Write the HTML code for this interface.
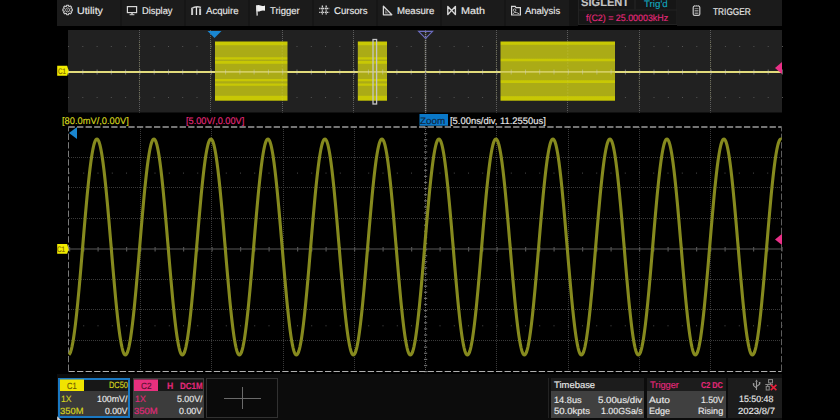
<!DOCTYPE html>
<html><head><meta charset="utf-8"><style>
html,body{margin:0;padding:0;width:840px;height:420px;overflow:hidden;background:#000;}
.t{position:absolute;white-space:nowrap;font-family:"Liberation Sans", sans-serif;line-height:20px;transform-origin:0 0;text-rendering:geometricPrecision;-webkit-text-stroke:0.15px currentColor;}
svg{position:absolute;left:0;top:0;}
</style></head><body>
<svg width="840" height="420" viewBox="0 0 840 420"><defs><linearGradient id="yb1" x1="0" y1="0" x2="0" y2="1"><stop offset="0" stop-color="#c8c804"/><stop offset="0.0541" stop-color="#c8c804"/><stop offset="0.0709" stop-color="#abab16"/><stop offset="0.2601" stop-color="#abab16"/><stop offset="0.2736" stop-color="#c8c804"/><stop offset="0.2973" stop-color="#c8c804"/><stop offset="0.3108" stop-color="#abab16"/><stop offset="0.3209" stop-color="#abab16"/><stop offset="0.3345" stop-color="#c8c804"/><stop offset="0.3682" stop-color="#c8c804"/><stop offset="0.3818" stop-color="#abab16"/><stop offset="0.6284" stop-color="#abab16"/><stop offset="0.6419" stop-color="#c8c804"/><stop offset="0.6655" stop-color="#c8c804"/><stop offset="0.6791" stop-color="#abab16"/><stop offset="0.7027" stop-color="#abab16"/><stop offset="0.7162" stop-color="#c8c804"/><stop offset="0.7399" stop-color="#c8c804"/><stop offset="0.7534" stop-color="#abab16"/><stop offset="0.9088" stop-color="#abab16"/><stop offset="0.9257" stop-color="#c8c804"/><stop offset="1" stop-color="#c8c804"/></linearGradient><linearGradient id="yb3" x1="0" y1="0" x2="0" y2="1"><stop offset="0" stop-color="#c8c804"/><stop offset="0.0473" stop-color="#c8c804"/><stop offset="0.0642" stop-color="#abab16"/><stop offset="0.2838" stop-color="#abab16"/><stop offset="0.2973" stop-color="#c8c804"/><stop offset="0.3277" stop-color="#c8c804"/><stop offset="0.3412" stop-color="#abab16"/><stop offset="0.6486" stop-color="#abab16"/><stop offset="0.6622" stop-color="#c8c804"/><stop offset="0.6926" stop-color="#c8c804"/><stop offset="0.7061" stop-color="#abab16"/><stop offset="0.9155" stop-color="#abab16"/><stop offset="0.9324" stop-color="#c8c804"/><stop offset="1" stop-color="#c8c804"/></linearGradient></defs>
<rect x="57" y="0" width="512" height="26" fill="#1b1b1b"/><rect x="120.5" y="0" width="1" height="26" fill="#121212"/><rect x="184.5" y="0" width="1" height="26" fill="#121212"/><rect x="248.5" y="0" width="1" height="26" fill="#121212"/><rect x="312.5" y="0" width="1" height="26" fill="#121212"/><rect x="376.5" y="0" width="1" height="26" fill="#121212"/><rect x="440.5" y="0" width="1" height="26" fill="#121212"/><rect x="504.5" y="0" width="1" height="26" fill="#121212"/><rect x="569" y="0" width="9" height="26" fill="#141414"/><rect x="578" y="0" width="99" height="25" fill="#161616"/><rect x="578" y="0" width="1" height="25" fill="#222"/><rect x="578" y="24" width="99" height="1" fill="#222"/><rect x="676.5" y="0" width="1" height="25" fill="#222"/><rect x="578" y="9.5" width="99" height="1" fill="#232323"/><rect x="634.5" y="0" width="1" height="9.5" fill="#262626"/><rect x="677" y="0" width="105" height="26" fill="#1b1b1b"/><polygon points="71.18,8.79 72.35,8.94 72.35,10.86 71.18,11.01 70.92,11.65 71.64,12.58 70.28,13.94 69.35,13.22 68.71,13.48 68.56,14.65 66.64,14.65 66.49,13.48 65.85,13.22 64.92,13.94 63.56,12.58 64.28,11.65 64.02,11.01 62.85,10.86 62.85,8.94 64.02,8.79 64.28,8.15 63.56,7.22 64.92,5.86 65.85,6.58 66.49,6.32 66.64,5.15 68.56,5.15 68.71,6.32 69.35,6.58 70.28,5.86 71.64,7.22 70.92,8.15" fill="none" stroke="#cfcfcf" stroke-width="1.05" stroke-linejoin="round"/><circle cx="67.6" cy="9.9" r="2.0" fill="none" stroke="#bdbdbd" stroke-width="0.9"/><circle cx="67.6" cy="9.9" r="0.6" fill="#aaa"/><rect x="127.4" y="6.6" width="9.2" height="6" fill="none" stroke="#d8d8d8" stroke-width="1.2"/><rect x="131.3" y="12.8" width="1.4" height="1.6" fill="#d8d8d8"/><rect x="129.6" y="14.2" width="4.8" height="1" fill="#d8d8d8"/><path d="M192.1,15 V9" fill="none" stroke="#c8c8c8" stroke-width="2.0"/><path d="M191.2,8.6 Q196,5.6 201,7.4" fill="none" stroke="#cfcfcf" stroke-width="1.3"/><path d="M200.1,15 V8.4" fill="none" stroke="#c8c8c8" stroke-width="2.0"/><rect x="195.8" y="7" width="1.3" height="8" fill="#e8e8e8"/><path d="M256,5.6 Q258.5,4.6 260.5,5.6 T265,5.4 V10.8 Q262.5,10 260.5,11 T256.6,11.2 Z" fill="#f0f0f0"/><path d="M256.6,5.6 L257.2,15.6" stroke="#ddd" stroke-width="1.3"/><line x1="322.4" y1="5.6" x2="322.4" y2="15" stroke="#d8d8d8" stroke-width="1.3" stroke-dasharray="1.3 0.6"/><line x1="326.2" y1="5.6" x2="326.2" y2="15" stroke="#d8d8d8" stroke-width="1.3" stroke-dasharray="1.3 0.6"/><line x1="319.2" y1="8.5" x2="329.2" y2="8.5" stroke="#d8d8d8" stroke-width="1.3" stroke-dasharray="1.3 0.6"/><line x1="319.2" y1="12.3" x2="329.2" y2="12.3" stroke="#d8d8d8" stroke-width="1.3" stroke-dasharray="1.3 0.6"/><path d="M383.4,6.2 V14.8 H391.8 Z" fill="none" stroke="#d8d8d8" stroke-width="1.3" stroke-linejoin="round"/><path d="M385,9.8 V13.4 H388.6 Z" fill="#777"/><path d="M447.8,6.4 L451.6,10.4 L455.4,6.4 V14.6 L451.6,10.4 L447.8,14.6 Z" fill="none" stroke="#d8d8d8" stroke-width="1.4" stroke-linejoin="round"/><path d="M511.6,6.4 H515.2 L516,7.6 H520.4 V15 H511.6 Z" fill="none" stroke="#d8d8d8" stroke-width="1.2"/><circle cx="514.6" cy="10.2" r="1.3" fill="none" stroke="#bbb" stroke-width="0.9"/><path d="M512.6,14 Q514.6,11.6 516.6,12.6 Q518,13.2 519.2,13.8" fill="none" stroke="#bbb" stroke-width="1"/><rect x="693.2" y="6" width="6.6" height="9.4" rx="1.4" fill="none" stroke="#c8c8c8" stroke-width="1.2"/><rect x="694.6" y="8.25" width="3.8" height="0.9" fill="#999"/><rect x="694.6" y="10.05" width="3.8" height="0.9" fill="#999"/><rect x="694.6" y="11.55" width="3.8" height="0.9" fill="#999"/><rect x="694.6" y="13.05" width="3.8" height="0.9" fill="#999"/><rect x="694.2" y="5.2" width="0.8" height="1" fill="#aaa"/><rect x="696.1" y="5.2" width="0.8" height="1" fill="#aaa"/><rect x="698.0" y="5.2" width="0.8" height="1" fill="#aaa"/><rect x="68" y="30" width="714" height="82.5" fill="#212121"/><line x1="139.5" y1="30" x2="139.5" y2="112.5" stroke="#5c5c5c" stroke-width="1" stroke-dasharray="1 1"/><line x1="210.5" y1="30" x2="210.5" y2="112.5" stroke="#5c5c5c" stroke-width="1" stroke-dasharray="1 1"/><line x1="282.5" y1="30" x2="282.5" y2="112.5" stroke="#5c5c5c" stroke-width="1" stroke-dasharray="1 1"/><line x1="353.5" y1="30" x2="353.5" y2="112.5" stroke="#5c5c5c" stroke-width="1" stroke-dasharray="1 1"/><line x1="425.5" y1="30" x2="425.5" y2="112.5" stroke="#5c5c5c" stroke-width="1" stroke-dasharray="1 1"/><line x1="496.5" y1="30" x2="496.5" y2="112.5" stroke="#5c5c5c" stroke-width="1" stroke-dasharray="1 1"/><line x1="567.5" y1="30" x2="567.5" y2="112.5" stroke="#5c5c5c" stroke-width="1" stroke-dasharray="1 1"/><line x1="639.5" y1="30" x2="639.5" y2="112.5" stroke="#5c5c5c" stroke-width="1" stroke-dasharray="1 1"/><line x1="710.5" y1="30" x2="710.5" y2="112.5" stroke="#5c5c5c" stroke-width="1" stroke-dasharray="1 1"/><rect x="68.0" y="46" width="1" height="1" fill="#555"/><rect x="82.3" y="46" width="1" height="1" fill="#555"/><rect x="96.6" y="46" width="1" height="1" fill="#555"/><rect x="110.8" y="46" width="1" height="1" fill="#555"/><rect x="125.1" y="46" width="1" height="1" fill="#555"/><rect x="139.4" y="46" width="1" height="1" fill="#555"/><rect x="153.7" y="46" width="1" height="1" fill="#555"/><rect x="168.0" y="46" width="1" height="1" fill="#555"/><rect x="182.2" y="46" width="1" height="1" fill="#555"/><rect x="196.5" y="46" width="1" height="1" fill="#555"/><rect x="210.8" y="46" width="1" height="1" fill="#555"/><rect x="225.1" y="46" width="1" height="1" fill="#555"/><rect x="239.4" y="46" width="1" height="1" fill="#555"/><rect x="253.6" y="46" width="1" height="1" fill="#555"/><rect x="267.9" y="46" width="1" height="1" fill="#555"/><rect x="282.2" y="46" width="1" height="1" fill="#555"/><rect x="296.5" y="46" width="1" height="1" fill="#555"/><rect x="310.8" y="46" width="1" height="1" fill="#555"/><rect x="325.0" y="46" width="1" height="1" fill="#555"/><rect x="339.3" y="46" width="1" height="1" fill="#555"/><rect x="353.6" y="46" width="1" height="1" fill="#555"/><rect x="367.9" y="46" width="1" height="1" fill="#555"/><rect x="382.2" y="46" width="1" height="1" fill="#555"/><rect x="396.4" y="46" width="1" height="1" fill="#555"/><rect x="410.7" y="46" width="1" height="1" fill="#555"/><rect x="425.0" y="46" width="1" height="1" fill="#555"/><rect x="439.3" y="46" width="1" height="1" fill="#555"/><rect x="453.6" y="46" width="1" height="1" fill="#555"/><rect x="467.8" y="46" width="1" height="1" fill="#555"/><rect x="482.1" y="46" width="1" height="1" fill="#555"/><rect x="496.4" y="46" width="1" height="1" fill="#555"/><rect x="510.7" y="46" width="1" height="1" fill="#555"/><rect x="525.0" y="46" width="1" height="1" fill="#555"/><rect x="539.2" y="46" width="1" height="1" fill="#555"/><rect x="553.5" y="46" width="1" height="1" fill="#555"/><rect x="567.8" y="46" width="1" height="1" fill="#555"/><rect x="582.1" y="46" width="1" height="1" fill="#555"/><rect x="596.4" y="46" width="1" height="1" fill="#555"/><rect x="610.6" y="46" width="1" height="1" fill="#555"/><rect x="624.9" y="46" width="1" height="1" fill="#555"/><rect x="639.2" y="46" width="1" height="1" fill="#555"/><rect x="653.5" y="46" width="1" height="1" fill="#555"/><rect x="667.8" y="46" width="1" height="1" fill="#555"/><rect x="682.0" y="46" width="1" height="1" fill="#555"/><rect x="696.3" y="46" width="1" height="1" fill="#555"/><rect x="710.6" y="46" width="1" height="1" fill="#555"/><rect x="724.9" y="46" width="1" height="1" fill="#555"/><rect x="739.2" y="46" width="1" height="1" fill="#555"/><rect x="753.4" y="46" width="1" height="1" fill="#555"/><rect x="767.7" y="46" width="1" height="1" fill="#555"/><rect x="782.0" y="46" width="1" height="1" fill="#555"/><rect x="68.0" y="97" width="1" height="1" fill="#555"/><rect x="82.3" y="97" width="1" height="1" fill="#555"/><rect x="96.6" y="97" width="1" height="1" fill="#555"/><rect x="110.8" y="97" width="1" height="1" fill="#555"/><rect x="125.1" y="97" width="1" height="1" fill="#555"/><rect x="139.4" y="97" width="1" height="1" fill="#555"/><rect x="153.7" y="97" width="1" height="1" fill="#555"/><rect x="168.0" y="97" width="1" height="1" fill="#555"/><rect x="182.2" y="97" width="1" height="1" fill="#555"/><rect x="196.5" y="97" width="1" height="1" fill="#555"/><rect x="210.8" y="97" width="1" height="1" fill="#555"/><rect x="225.1" y="97" width="1" height="1" fill="#555"/><rect x="239.4" y="97" width="1" height="1" fill="#555"/><rect x="253.6" y="97" width="1" height="1" fill="#555"/><rect x="267.9" y="97" width="1" height="1" fill="#555"/><rect x="282.2" y="97" width="1" height="1" fill="#555"/><rect x="296.5" y="97" width="1" height="1" fill="#555"/><rect x="310.8" y="97" width="1" height="1" fill="#555"/><rect x="325.0" y="97" width="1" height="1" fill="#555"/><rect x="339.3" y="97" width="1" height="1" fill="#555"/><rect x="353.6" y="97" width="1" height="1" fill="#555"/><rect x="367.9" y="97" width="1" height="1" fill="#555"/><rect x="382.2" y="97" width="1" height="1" fill="#555"/><rect x="396.4" y="97" width="1" height="1" fill="#555"/><rect x="410.7" y="97" width="1" height="1" fill="#555"/><rect x="425.0" y="97" width="1" height="1" fill="#555"/><rect x="439.3" y="97" width="1" height="1" fill="#555"/><rect x="453.6" y="97" width="1" height="1" fill="#555"/><rect x="467.8" y="97" width="1" height="1" fill="#555"/><rect x="482.1" y="97" width="1" height="1" fill="#555"/><rect x="496.4" y="97" width="1" height="1" fill="#555"/><rect x="510.7" y="97" width="1" height="1" fill="#555"/><rect x="525.0" y="97" width="1" height="1" fill="#555"/><rect x="539.2" y="97" width="1" height="1" fill="#555"/><rect x="553.5" y="97" width="1" height="1" fill="#555"/><rect x="567.8" y="97" width="1" height="1" fill="#555"/><rect x="582.1" y="97" width="1" height="1" fill="#555"/><rect x="596.4" y="97" width="1" height="1" fill="#555"/><rect x="610.6" y="97" width="1" height="1" fill="#555"/><rect x="624.9" y="97" width="1" height="1" fill="#555"/><rect x="639.2" y="97" width="1" height="1" fill="#555"/><rect x="653.5" y="97" width="1" height="1" fill="#555"/><rect x="667.8" y="97" width="1" height="1" fill="#555"/><rect x="682.0" y="97" width="1" height="1" fill="#555"/><rect x="696.3" y="97" width="1" height="1" fill="#555"/><rect x="710.6" y="97" width="1" height="1" fill="#555"/><rect x="724.9" y="97" width="1" height="1" fill="#555"/><rect x="739.2" y="97" width="1" height="1" fill="#555"/><rect x="753.4" y="97" width="1" height="1" fill="#555"/><rect x="767.7" y="97" width="1" height="1" fill="#555"/><rect x="782.0" y="97" width="1" height="1" fill="#555"/><rect x="68" y="71" width="714" height="2" fill="#e2dc7c"/><rect x="215" y="41.5" width="72.5" height="59.2" fill="url(#yb1)"/><rect x="357.8" y="41.5" width="29.19999999999999" height="59.2" fill="url(#yb1)"/><rect x="500.5" y="41.5" width="114.5" height="59.2" fill="url(#yb3)"/><line x1="139.4" y1="41.5" x2="139.4" y2="101" stroke="#e0e080" stroke-width="1" stroke-dasharray="1 2" opacity="0.35"/><line x1="210.8" y1="41.5" x2="210.8" y2="101" stroke="#e0e080" stroke-width="1" stroke-dasharray="1 2" opacity="0.35"/><line x1="282.2" y1="41.5" x2="282.2" y2="101" stroke="#e0e080" stroke-width="1" stroke-dasharray="1 2" opacity="0.35"/><line x1="353.6" y1="41.5" x2="353.6" y2="101" stroke="#e0e080" stroke-width="1" stroke-dasharray="1 2" opacity="0.35"/><line x1="425.0" y1="41.5" x2="425.0" y2="101" stroke="#e0e080" stroke-width="1" stroke-dasharray="1 2" opacity="0.35"/><line x1="496.4" y1="41.5" x2="496.4" y2="101" stroke="#e0e080" stroke-width="1" stroke-dasharray="1 2" opacity="0.35"/><line x1="567.8" y1="41.5" x2="567.8" y2="101" stroke="#e0e080" stroke-width="1" stroke-dasharray="1 2" opacity="0.35"/><line x1="639.2" y1="41.5" x2="639.2" y2="101" stroke="#e0e080" stroke-width="1" stroke-dasharray="1 2" opacity="0.35"/><line x1="710.6" y1="41.5" x2="710.6" y2="101" stroke="#e0e080" stroke-width="1" stroke-dasharray="1 2" opacity="0.35"/><rect x="68" y="71.2" width="714" height="1.4" fill="#e2dc7c" opacity="0.9"/><rect x="68.0" y="69.5" width="1" height="5" fill="#ccc" opacity="0.45"/><rect x="82.3" y="69.5" width="1" height="5" fill="#ccc" opacity="0.45"/><rect x="96.6" y="69.5" width="1" height="5" fill="#ccc" opacity="0.45"/><rect x="110.8" y="69.5" width="1" height="5" fill="#ccc" opacity="0.45"/><rect x="125.1" y="69.5" width="1" height="5" fill="#ccc" opacity="0.45"/><rect x="139.4" y="69.5" width="1" height="5" fill="#ccc" opacity="0.45"/><rect x="153.7" y="69.5" width="1" height="5" fill="#ccc" opacity="0.45"/><rect x="168.0" y="69.5" width="1" height="5" fill="#ccc" opacity="0.45"/><rect x="182.2" y="69.5" width="1" height="5" fill="#ccc" opacity="0.45"/><rect x="196.5" y="69.5" width="1" height="5" fill="#ccc" opacity="0.45"/><rect x="210.8" y="69.5" width="1" height="5" fill="#ccc" opacity="0.45"/><rect x="225.1" y="69.5" width="1" height="5" fill="#ccc" opacity="0.45"/><rect x="239.4" y="69.5" width="1" height="5" fill="#ccc" opacity="0.45"/><rect x="253.6" y="69.5" width="1" height="5" fill="#ccc" opacity="0.45"/><rect x="267.9" y="69.5" width="1" height="5" fill="#ccc" opacity="0.45"/><rect x="282.2" y="69.5" width="1" height="5" fill="#ccc" opacity="0.45"/><rect x="296.5" y="69.5" width="1" height="5" fill="#ccc" opacity="0.45"/><rect x="310.8" y="69.5" width="1" height="5" fill="#ccc" opacity="0.45"/><rect x="325.0" y="69.5" width="1" height="5" fill="#ccc" opacity="0.45"/><rect x="339.3" y="69.5" width="1" height="5" fill="#ccc" opacity="0.45"/><rect x="353.6" y="69.5" width="1" height="5" fill="#ccc" opacity="0.45"/><rect x="367.9" y="69.5" width="1" height="5" fill="#ccc" opacity="0.45"/><rect x="382.2" y="69.5" width="1" height="5" fill="#ccc" opacity="0.45"/><rect x="396.4" y="69.5" width="1" height="5" fill="#ccc" opacity="0.45"/><rect x="410.7" y="69.5" width="1" height="5" fill="#ccc" opacity="0.45"/><rect x="425.0" y="69.5" width="1" height="5" fill="#ccc" opacity="0.45"/><rect x="439.3" y="69.5" width="1" height="5" fill="#ccc" opacity="0.45"/><rect x="453.6" y="69.5" width="1" height="5" fill="#ccc" opacity="0.45"/><rect x="467.8" y="69.5" width="1" height="5" fill="#ccc" opacity="0.45"/><rect x="482.1" y="69.5" width="1" height="5" fill="#ccc" opacity="0.45"/><rect x="496.4" y="69.5" width="1" height="5" fill="#ccc" opacity="0.45"/><rect x="510.7" y="69.5" width="1" height="5" fill="#ccc" opacity="0.45"/><rect x="525.0" y="69.5" width="1" height="5" fill="#ccc" opacity="0.45"/><rect x="539.2" y="69.5" width="1" height="5" fill="#ccc" opacity="0.45"/><rect x="553.5" y="69.5" width="1" height="5" fill="#ccc" opacity="0.45"/><rect x="567.8" y="69.5" width="1" height="5" fill="#ccc" opacity="0.45"/><rect x="582.1" y="69.5" width="1" height="5" fill="#ccc" opacity="0.45"/><rect x="596.4" y="69.5" width="1" height="5" fill="#ccc" opacity="0.45"/><rect x="610.6" y="69.5" width="1" height="5" fill="#ccc" opacity="0.45"/><rect x="624.9" y="69.5" width="1" height="5" fill="#ccc" opacity="0.45"/><rect x="639.2" y="69.5" width="1" height="5" fill="#ccc" opacity="0.45"/><rect x="653.5" y="69.5" width="1" height="5" fill="#ccc" opacity="0.45"/><rect x="667.8" y="69.5" width="1" height="5" fill="#ccc" opacity="0.45"/><rect x="682.0" y="69.5" width="1" height="5" fill="#ccc" opacity="0.45"/><rect x="696.3" y="69.5" width="1" height="5" fill="#ccc" opacity="0.45"/><rect x="710.6" y="69.5" width="1" height="5" fill="#ccc" opacity="0.45"/><rect x="724.9" y="69.5" width="1" height="5" fill="#ccc" opacity="0.45"/><rect x="739.2" y="69.5" width="1" height="5" fill="#ccc" opacity="0.45"/><rect x="753.4" y="69.5" width="1" height="5" fill="#ccc" opacity="0.45"/><rect x="767.7" y="69.5" width="1" height="5" fill="#ccc" opacity="0.45"/><rect x="782.0" y="69.5" width="1" height="5" fill="#ccc" opacity="0.45"/><rect x="373" y="39.5" width="3.6" height="64.5" fill="none" stroke="#c4c4c4" stroke-width="1.3"/><polygon points="207.5,31 221.5,31 214.5,38" fill="#1a86d0"/><line x1="425.6" y1="32" x2="425.6" y2="112.5" stroke="#8c8c8c" stroke-width="1.4" stroke-dasharray="1.2 0.8"/><polygon points="418.6,31.4 432.6,31.4 425.6,38.4" fill="none" stroke="#6c6cc0" stroke-width="1.1"/><path d="M57.2,65.8 h10 l1.4,5.2 l-1.4,4.8 h-10 z" fill="#f2ec00"/><polygon points="775,68 782,62 782,74" fill="#ea3088"/><line x1="140.5" y1="127" x2="140.5" y2="371" stroke="#3a3a3a" stroke-width="1" stroke-dasharray="1 1"/><line x1="211.5" y1="127" x2="211.5" y2="371" stroke="#3a3a3a" stroke-width="1" stroke-dasharray="1 1"/><line x1="283.5" y1="127" x2="283.5" y2="371" stroke="#3a3a3a" stroke-width="1" stroke-dasharray="1 1"/><line x1="354.5" y1="127" x2="354.5" y2="371" stroke="#3a3a3a" stroke-width="1" stroke-dasharray="1 1"/><line x1="496.5" y1="127" x2="496.5" y2="371" stroke="#3a3a3a" stroke-width="1" stroke-dasharray="1 1"/><line x1="568.5" y1="127" x2="568.5" y2="371" stroke="#3a3a3a" stroke-width="1" stroke-dasharray="1 1"/><line x1="639.5" y1="127" x2="639.5" y2="371" stroke="#3a3a3a" stroke-width="1" stroke-dasharray="1 1"/><line x1="710.5" y1="127" x2="710.5" y2="371" stroke="#3a3a3a" stroke-width="1" stroke-dasharray="1 1"/><line x1="69" y1="157.5" x2="781.5" y2="157.5" stroke="#3a3a3a" stroke-width="1" stroke-dasharray="1 1"/><line x1="69" y1="187.5" x2="781.5" y2="187.5" stroke="#3a3a3a" stroke-width="1" stroke-dasharray="1 1"/><line x1="69" y1="218.5" x2="781.5" y2="218.5" stroke="#3a3a3a" stroke-width="1" stroke-dasharray="1 1"/><line x1="69" y1="279.5" x2="781.5" y2="279.5" stroke="#3a3a3a" stroke-width="1" stroke-dasharray="1 1"/><line x1="69" y1="309.5" x2="781.5" y2="309.5" stroke="#3a3a3a" stroke-width="1" stroke-dasharray="1 1"/><line x1="69" y1="340.5" x2="781.5" y2="340.5" stroke="#3a3a3a" stroke-width="1" stroke-dasharray="1 1"/><rect x="69" y="248" width="712.5" height="2" fill="#2c2c2c"/><rect x="69.0" y="247" width="1.2" height="4.5" fill="#505050"/><rect x="83.2" y="247" width="1.2" height="4.5" fill="#505050"/><rect x="97.5" y="247" width="1.2" height="4.5" fill="#505050"/><rect x="111.8" y="247" width="1.2" height="4.5" fill="#505050"/><rect x="126.0" y="247" width="1.2" height="4.5" fill="#505050"/><rect x="140.2" y="247" width="1.2" height="4.5" fill="#505050"/><rect x="154.5" y="247" width="1.2" height="4.5" fill="#505050"/><rect x="168.8" y="247" width="1.2" height="4.5" fill="#505050"/><rect x="183.0" y="247" width="1.2" height="4.5" fill="#505050"/><rect x="197.2" y="247" width="1.2" height="4.5" fill="#505050"/><rect x="211.5" y="247" width="1.2" height="4.5" fill="#505050"/><rect x="225.8" y="247" width="1.2" height="4.5" fill="#505050"/><rect x="240.0" y="247" width="1.2" height="4.5" fill="#505050"/><rect x="254.2" y="247" width="1.2" height="4.5" fill="#505050"/><rect x="268.5" y="247" width="1.2" height="4.5" fill="#505050"/><rect x="282.8" y="247" width="1.2" height="4.5" fill="#505050"/><rect x="297.0" y="247" width="1.2" height="4.5" fill="#505050"/><rect x="311.2" y="247" width="1.2" height="4.5" fill="#505050"/><rect x="325.5" y="247" width="1.2" height="4.5" fill="#505050"/><rect x="339.8" y="247" width="1.2" height="4.5" fill="#505050"/><rect x="354.0" y="247" width="1.2" height="4.5" fill="#505050"/><rect x="368.2" y="247" width="1.2" height="4.5" fill="#505050"/><rect x="382.5" y="247" width="1.2" height="4.5" fill="#505050"/><rect x="396.8" y="247" width="1.2" height="4.5" fill="#505050"/><rect x="411.0" y="247" width="1.2" height="4.5" fill="#505050"/><rect x="425.2" y="247" width="1.2" height="4.5" fill="#505050"/><rect x="439.5" y="247" width="1.2" height="4.5" fill="#505050"/><rect x="453.8" y="247" width="1.2" height="4.5" fill="#505050"/><rect x="468.0" y="247" width="1.2" height="4.5" fill="#505050"/><rect x="482.2" y="247" width="1.2" height="4.5" fill="#505050"/><rect x="496.5" y="247" width="1.2" height="4.5" fill="#505050"/><rect x="510.8" y="247" width="1.2" height="4.5" fill="#505050"/><rect x="525.0" y="247" width="1.2" height="4.5" fill="#505050"/><rect x="539.2" y="247" width="1.2" height="4.5" fill="#505050"/><rect x="553.5" y="247" width="1.2" height="4.5" fill="#505050"/><rect x="567.8" y="247" width="1.2" height="4.5" fill="#505050"/><rect x="582.0" y="247" width="1.2" height="4.5" fill="#505050"/><rect x="596.2" y="247" width="1.2" height="4.5" fill="#505050"/><rect x="610.5" y="247" width="1.2" height="4.5" fill="#505050"/><rect x="624.8" y="247" width="1.2" height="4.5" fill="#505050"/><rect x="639.0" y="247" width="1.2" height="4.5" fill="#505050"/><rect x="653.2" y="247" width="1.2" height="4.5" fill="#505050"/><rect x="667.5" y="247" width="1.2" height="4.5" fill="#505050"/><rect x="681.8" y="247" width="1.2" height="4.5" fill="#505050"/><rect x="696.0" y="247" width="1.2" height="4.5" fill="#505050"/><rect x="710.2" y="247" width="1.2" height="4.5" fill="#505050"/><rect x="724.5" y="247" width="1.2" height="4.5" fill="#505050"/><rect x="738.8" y="247" width="1.2" height="4.5" fill="#505050"/><rect x="753.0" y="247" width="1.2" height="4.5" fill="#505050"/><rect x="767.2" y="247" width="1.2" height="4.5" fill="#505050"/><rect x="781.5" y="247" width="1.2" height="4.5" fill="#505050"/><line x1="425.5" y1="127" x2="425.5" y2="371" stroke="#5a5a5a" stroke-width="1" stroke-dasharray="1 1"/><rect x="424" y="127.0" width="3.2" height="1.2" fill="#6a6a6a"/><rect x="424" y="133.1" width="3.2" height="1.2" fill="#6a6a6a"/><rect x="424" y="139.2" width="3.2" height="1.2" fill="#6a6a6a"/><rect x="424" y="145.3" width="3.2" height="1.2" fill="#6a6a6a"/><rect x="424" y="151.4" width="3.2" height="1.2" fill="#6a6a6a"/><rect x="424" y="157.5" width="3.2" height="1.2" fill="#6a6a6a"/><rect x="424" y="163.6" width="3.2" height="1.2" fill="#6a6a6a"/><rect x="424" y="169.7" width="3.2" height="1.2" fill="#6a6a6a"/><rect x="424" y="175.8" width="3.2" height="1.2" fill="#6a6a6a"/><rect x="424" y="181.9" width="3.2" height="1.2" fill="#6a6a6a"/><rect x="424" y="188.0" width="3.2" height="1.2" fill="#6a6a6a"/><rect x="424" y="194.1" width="3.2" height="1.2" fill="#6a6a6a"/><rect x="424" y="200.2" width="3.2" height="1.2" fill="#6a6a6a"/><rect x="424" y="206.3" width="3.2" height="1.2" fill="#6a6a6a"/><rect x="424" y="212.4" width="3.2" height="1.2" fill="#6a6a6a"/><rect x="424" y="218.5" width="3.2" height="1.2" fill="#6a6a6a"/><rect x="424" y="224.6" width="3.2" height="1.2" fill="#6a6a6a"/><rect x="424" y="230.7" width="3.2" height="1.2" fill="#6a6a6a"/><rect x="424" y="236.8" width="3.2" height="1.2" fill="#6a6a6a"/><rect x="424" y="242.9" width="3.2" height="1.2" fill="#6a6a6a"/><rect x="424" y="249.0" width="3.2" height="1.2" fill="#6a6a6a"/><rect x="424" y="255.1" width="3.2" height="1.2" fill="#6a6a6a"/><rect x="424" y="261.2" width="3.2" height="1.2" fill="#6a6a6a"/><rect x="424" y="267.3" width="3.2" height="1.2" fill="#6a6a6a"/><rect x="424" y="273.4" width="3.2" height="1.2" fill="#6a6a6a"/><rect x="424" y="279.5" width="3.2" height="1.2" fill="#6a6a6a"/><rect x="424" y="285.6" width="3.2" height="1.2" fill="#6a6a6a"/><rect x="424" y="291.7" width="3.2" height="1.2" fill="#6a6a6a"/><rect x="424" y="297.8" width="3.2" height="1.2" fill="#6a6a6a"/><rect x="424" y="303.9" width="3.2" height="1.2" fill="#6a6a6a"/><rect x="424" y="310.0" width="3.2" height="1.2" fill="#6a6a6a"/><rect x="424" y="316.1" width="3.2" height="1.2" fill="#6a6a6a"/><rect x="424" y="322.2" width="3.2" height="1.2" fill="#6a6a6a"/><rect x="424" y="328.3" width="3.2" height="1.2" fill="#6a6a6a"/><rect x="424" y="334.4" width="3.2" height="1.2" fill="#6a6a6a"/><rect x="424" y="340.5" width="3.2" height="1.2" fill="#6a6a6a"/><rect x="424" y="346.6" width="3.2" height="1.2" fill="#6a6a6a"/><rect x="424" y="352.7" width="3.2" height="1.2" fill="#6a6a6a"/><rect x="424" y="358.8" width="3.2" height="1.2" fill="#6a6a6a"/><rect x="424" y="364.9" width="3.2" height="1.2" fill="#6a6a6a"/><rect x="424" y="371.0" width="3.2" height="1.2" fill="#6a6a6a"/><rect x="69.0" y="172.6" width="1" height="1" fill="#4a4a4a"/><rect x="83.2" y="172.6" width="1" height="1" fill="#4a4a4a"/><rect x="97.5" y="172.6" width="1" height="1" fill="#4a4a4a"/><rect x="111.8" y="172.6" width="1" height="1" fill="#4a4a4a"/><rect x="126.0" y="172.6" width="1" height="1" fill="#4a4a4a"/><rect x="140.2" y="172.6" width="1" height="1" fill="#4a4a4a"/><rect x="154.5" y="172.6" width="1" height="1" fill="#4a4a4a"/><rect x="168.8" y="172.6" width="1" height="1" fill="#4a4a4a"/><rect x="183.0" y="172.6" width="1" height="1" fill="#4a4a4a"/><rect x="197.2" y="172.6" width="1" height="1" fill="#4a4a4a"/><rect x="211.5" y="172.6" width="1" height="1" fill="#4a4a4a"/><rect x="225.8" y="172.6" width="1" height="1" fill="#4a4a4a"/><rect x="240.0" y="172.6" width="1" height="1" fill="#4a4a4a"/><rect x="254.2" y="172.6" width="1" height="1" fill="#4a4a4a"/><rect x="268.5" y="172.6" width="1" height="1" fill="#4a4a4a"/><rect x="282.8" y="172.6" width="1" height="1" fill="#4a4a4a"/><rect x="297.0" y="172.6" width="1" height="1" fill="#4a4a4a"/><rect x="311.2" y="172.6" width="1" height="1" fill="#4a4a4a"/><rect x="325.5" y="172.6" width="1" height="1" fill="#4a4a4a"/><rect x="339.8" y="172.6" width="1" height="1" fill="#4a4a4a"/><rect x="354.0" y="172.6" width="1" height="1" fill="#4a4a4a"/><rect x="368.2" y="172.6" width="1" height="1" fill="#4a4a4a"/><rect x="382.5" y="172.6" width="1" height="1" fill="#4a4a4a"/><rect x="396.8" y="172.6" width="1" height="1" fill="#4a4a4a"/><rect x="411.0" y="172.6" width="1" height="1" fill="#4a4a4a"/><rect x="425.2" y="172.6" width="1" height="1" fill="#4a4a4a"/><rect x="439.5" y="172.6" width="1" height="1" fill="#4a4a4a"/><rect x="453.8" y="172.6" width="1" height="1" fill="#4a4a4a"/><rect x="468.0" y="172.6" width="1" height="1" fill="#4a4a4a"/><rect x="482.2" y="172.6" width="1" height="1" fill="#4a4a4a"/><rect x="496.5" y="172.6" width="1" height="1" fill="#4a4a4a"/><rect x="510.8" y="172.6" width="1" height="1" fill="#4a4a4a"/><rect x="525.0" y="172.6" width="1" height="1" fill="#4a4a4a"/><rect x="539.2" y="172.6" width="1" height="1" fill="#4a4a4a"/><rect x="553.5" y="172.6" width="1" height="1" fill="#4a4a4a"/><rect x="567.8" y="172.6" width="1" height="1" fill="#4a4a4a"/><rect x="582.0" y="172.6" width="1" height="1" fill="#4a4a4a"/><rect x="596.2" y="172.6" width="1" height="1" fill="#4a4a4a"/><rect x="610.5" y="172.6" width="1" height="1" fill="#4a4a4a"/><rect x="624.8" y="172.6" width="1" height="1" fill="#4a4a4a"/><rect x="639.0" y="172.6" width="1" height="1" fill="#4a4a4a"/><rect x="653.2" y="172.6" width="1" height="1" fill="#4a4a4a"/><rect x="667.5" y="172.6" width="1" height="1" fill="#4a4a4a"/><rect x="681.8" y="172.6" width="1" height="1" fill="#4a4a4a"/><rect x="696.0" y="172.6" width="1" height="1" fill="#4a4a4a"/><rect x="710.2" y="172.6" width="1" height="1" fill="#4a4a4a"/><rect x="724.5" y="172.6" width="1" height="1" fill="#4a4a4a"/><rect x="738.8" y="172.6" width="1" height="1" fill="#4a4a4a"/><rect x="753.0" y="172.6" width="1" height="1" fill="#4a4a4a"/><rect x="767.2" y="172.6" width="1" height="1" fill="#4a4a4a"/><rect x="781.5" y="172.6" width="1" height="1" fill="#4a4a4a"/><rect x="69.0" y="325.3" width="1" height="1" fill="#4a4a4a"/><rect x="83.2" y="325.3" width="1" height="1" fill="#4a4a4a"/><rect x="97.5" y="325.3" width="1" height="1" fill="#4a4a4a"/><rect x="111.8" y="325.3" width="1" height="1" fill="#4a4a4a"/><rect x="126.0" y="325.3" width="1" height="1" fill="#4a4a4a"/><rect x="140.2" y="325.3" width="1" height="1" fill="#4a4a4a"/><rect x="154.5" y="325.3" width="1" height="1" fill="#4a4a4a"/><rect x="168.8" y="325.3" width="1" height="1" fill="#4a4a4a"/><rect x="183.0" y="325.3" width="1" height="1" fill="#4a4a4a"/><rect x="197.2" y="325.3" width="1" height="1" fill="#4a4a4a"/><rect x="211.5" y="325.3" width="1" height="1" fill="#4a4a4a"/><rect x="225.8" y="325.3" width="1" height="1" fill="#4a4a4a"/><rect x="240.0" y="325.3" width="1" height="1" fill="#4a4a4a"/><rect x="254.2" y="325.3" width="1" height="1" fill="#4a4a4a"/><rect x="268.5" y="325.3" width="1" height="1" fill="#4a4a4a"/><rect x="282.8" y="325.3" width="1" height="1" fill="#4a4a4a"/><rect x="297.0" y="325.3" width="1" height="1" fill="#4a4a4a"/><rect x="311.2" y="325.3" width="1" height="1" fill="#4a4a4a"/><rect x="325.5" y="325.3" width="1" height="1" fill="#4a4a4a"/><rect x="339.8" y="325.3" width="1" height="1" fill="#4a4a4a"/><rect x="354.0" y="325.3" width="1" height="1" fill="#4a4a4a"/><rect x="368.2" y="325.3" width="1" height="1" fill="#4a4a4a"/><rect x="382.5" y="325.3" width="1" height="1" fill="#4a4a4a"/><rect x="396.8" y="325.3" width="1" height="1" fill="#4a4a4a"/><rect x="411.0" y="325.3" width="1" height="1" fill="#4a4a4a"/><rect x="425.2" y="325.3" width="1" height="1" fill="#4a4a4a"/><rect x="439.5" y="325.3" width="1" height="1" fill="#4a4a4a"/><rect x="453.8" y="325.3" width="1" height="1" fill="#4a4a4a"/><rect x="468.0" y="325.3" width="1" height="1" fill="#4a4a4a"/><rect x="482.2" y="325.3" width="1" height="1" fill="#4a4a4a"/><rect x="496.5" y="325.3" width="1" height="1" fill="#4a4a4a"/><rect x="510.8" y="325.3" width="1" height="1" fill="#4a4a4a"/><rect x="525.0" y="325.3" width="1" height="1" fill="#4a4a4a"/><rect x="539.2" y="325.3" width="1" height="1" fill="#4a4a4a"/><rect x="553.5" y="325.3" width="1" height="1" fill="#4a4a4a"/><rect x="567.8" y="325.3" width="1" height="1" fill="#4a4a4a"/><rect x="582.0" y="325.3" width="1" height="1" fill="#4a4a4a"/><rect x="596.2" y="325.3" width="1" height="1" fill="#4a4a4a"/><rect x="610.5" y="325.3" width="1" height="1" fill="#4a4a4a"/><rect x="624.8" y="325.3" width="1" height="1" fill="#4a4a4a"/><rect x="639.0" y="325.3" width="1" height="1" fill="#4a4a4a"/><rect x="653.2" y="325.3" width="1" height="1" fill="#4a4a4a"/><rect x="667.5" y="325.3" width="1" height="1" fill="#4a4a4a"/><rect x="681.8" y="325.3" width="1" height="1" fill="#4a4a4a"/><rect x="696.0" y="325.3" width="1" height="1" fill="#4a4a4a"/><rect x="710.2" y="325.3" width="1" height="1" fill="#4a4a4a"/><rect x="724.5" y="325.3" width="1" height="1" fill="#4a4a4a"/><rect x="738.8" y="325.3" width="1" height="1" fill="#4a4a4a"/><rect x="753.0" y="325.3" width="1" height="1" fill="#4a4a4a"/><rect x="767.2" y="325.3" width="1" height="1" fill="#4a4a4a"/><rect x="781.5" y="325.3" width="1" height="1" fill="#4a4a4a"/><line x1="68.5" y1="127" x2="781.5" y2="127" stroke="#9a9a9a" stroke-width="1.4" stroke-dasharray="6.3 2.25"/><line x1="68.5" y1="371.5" x2="781.5" y2="371.5" stroke="#b0b0b0" stroke-width="1" stroke-dasharray="6.3 2.25"/><line x1="68.5" y1="126.5" x2="68.5" y2="371.5" stroke="#7a7a7a" stroke-width="1" stroke-dasharray="6.3 2.25" stroke-dashoffset="1.4"/><line x1="781.5" y1="126.5" x2="781.5" y2="371.5" stroke="#5e5e5e" stroke-width="1" stroke-dasharray="6.3 2.25" stroke-dashoffset="1.4"/><polyline points="69.00,354.76 69.50,354.21 70.00,353.32 70.50,352.12 71.00,350.59 71.50,348.76 72.00,346.61 72.50,344.16 73.00,341.41 73.50,338.38 74.00,335.07 74.50,331.49 75.00,327.66 75.50,323.58 76.00,319.27 76.50,314.74 77.00,310.00 77.50,305.07 78.00,299.97 78.50,294.70 79.00,289.29 79.50,283.75 80.00,278.10 80.50,272.36 81.00,266.54 81.50,260.65 82.00,254.73 82.50,248.79 83.00,242.83 83.50,236.90 84.00,230.99 84.50,225.13 85.00,219.34 85.50,213.63 86.00,208.02 86.50,202.53 87.00,197.18 87.50,191.97 88.00,186.94 88.50,182.08 89.00,177.43 89.50,172.98 90.00,168.76 90.50,164.78 91.00,161.05 91.50,157.58 92.00,154.37 92.50,151.46 93.00,148.83 93.50,146.50 94.00,144.47 94.50,142.76 95.00,141.36 95.50,140.28 96.00,139.53 96.50,139.10 97.00,139.01 97.50,139.24 98.00,139.79 98.50,140.68 99.00,141.88 99.50,143.41 100.00,145.24 100.50,147.39 101.00,149.84 101.50,152.59 102.00,155.62 102.50,158.93 103.00,162.51 103.50,166.34 104.00,170.42 104.50,174.73 105.00,179.26 105.50,184.00 106.00,188.93 106.50,194.03 107.00,199.30 107.50,204.71 108.00,210.25 108.50,215.90 109.00,221.64 109.50,227.46 110.00,233.35 110.50,239.27 111.00,245.21 111.50,251.17 112.00,257.10 112.50,263.01 113.00,268.87 113.50,274.66 114.00,280.37 114.50,285.98 115.00,291.47 115.50,296.82 116.00,302.03 116.50,307.06 117.00,311.92 117.50,316.57 118.00,321.02 118.50,325.24 119.00,329.22 119.50,332.95 120.00,336.42 120.50,339.63 121.00,342.54 121.50,345.17 122.00,347.50 122.50,349.53 123.00,351.24 123.50,352.64 124.00,353.72 124.50,354.47 125.00,354.90 125.50,354.99 126.00,354.76 126.50,354.21 127.00,353.32 127.50,352.12 128.00,350.59 128.50,348.76 129.00,346.61 129.50,344.16 130.00,341.41 130.50,338.38 131.00,335.07 131.50,331.49 132.00,327.66 132.50,323.58 133.00,319.27 133.50,314.74 134.00,310.00 134.50,305.07 135.00,299.97 135.50,294.70 136.00,289.29 136.50,283.75 137.00,278.10 137.50,272.36 138.00,266.54 138.50,260.65 139.00,254.73 139.50,248.79 140.00,242.83 140.50,236.90 141.00,230.99 141.50,225.13 142.00,219.34 142.50,213.63 143.00,208.02 143.50,202.53 144.00,197.18 144.50,191.97 145.00,186.94 145.50,182.08 146.00,177.43 146.50,172.98 147.00,168.76 147.50,164.78 148.00,161.05 148.50,157.58 149.00,154.37 149.50,151.46 150.00,148.83 150.50,146.50 151.00,144.47 151.50,142.76 152.00,141.36 152.50,140.28 153.00,139.53 153.50,139.10 154.00,139.01 154.50,139.24 155.00,139.79 155.50,140.68 156.00,141.88 156.50,143.41 157.00,145.24 157.50,147.39 158.00,149.84 158.50,152.59 159.00,155.62 159.50,158.93 160.00,162.51 160.50,166.34 161.00,170.42 161.50,174.73 162.00,179.26 162.50,184.00 163.00,188.93 163.50,194.03 164.00,199.30 164.50,204.71 165.00,210.25 165.50,215.90 166.00,221.64 166.50,227.46 167.00,233.35 167.50,239.27 168.00,245.21 168.50,251.17 169.00,257.10 169.50,263.01 170.00,268.87 170.50,274.66 171.00,280.37 171.50,285.98 172.00,291.47 172.50,296.82 173.00,302.03 173.50,307.06 174.00,311.92 174.50,316.57 175.00,321.02 175.50,325.24 176.00,329.22 176.50,332.95 177.00,336.42 177.50,339.63 178.00,342.54 178.50,345.17 179.00,347.50 179.50,349.53 180.00,351.24 180.50,352.64 181.00,353.72 181.50,354.47 182.00,354.90 182.50,354.99 183.00,354.76 183.50,354.21 184.00,353.32 184.50,352.12 185.00,350.59 185.50,348.76 186.00,346.61 186.50,344.16 187.00,341.41 187.50,338.38 188.00,335.07 188.50,331.49 189.00,327.66 189.50,323.58 190.00,319.27 190.50,314.74 191.00,310.00 191.50,305.07 192.00,299.97 192.50,294.70 193.00,289.29 193.50,283.75 194.00,278.10 194.50,272.36 195.00,266.54 195.50,260.65 196.00,254.73 196.50,248.79 197.00,242.83 197.50,236.90 198.00,230.99 198.50,225.13 199.00,219.34 199.50,213.63 200.00,208.02 200.50,202.53 201.00,197.18 201.50,191.97 202.00,186.94 202.50,182.08 203.00,177.43 203.50,172.98 204.00,168.76 204.50,164.78 205.00,161.05 205.50,157.58 206.00,154.37 206.50,151.46 207.00,148.83 207.50,146.50 208.00,144.47 208.50,142.76 209.00,141.36 209.50,140.28 210.00,139.53 210.50,139.10 211.00,139.01 211.50,139.24 212.00,139.79 212.50,140.68 213.00,141.88 213.50,143.41 214.00,145.24 214.50,147.39 215.00,149.84 215.50,152.59 216.00,155.62 216.50,158.93 217.00,162.51 217.50,166.34 218.00,170.42 218.50,174.73 219.00,179.26 219.50,184.00 220.00,188.93 220.50,194.03 221.00,199.30 221.50,204.71 222.00,210.25 222.50,215.90 223.00,221.64 223.50,227.46 224.00,233.35 224.50,239.27 225.00,245.21 225.50,251.17 226.00,257.10 226.50,263.01 227.00,268.87 227.50,274.66 228.00,280.37 228.50,285.98 229.00,291.47 229.50,296.82 230.00,302.03 230.50,307.06 231.00,311.92 231.50,316.57 232.00,321.02 232.50,325.24 233.00,329.22 233.50,332.95 234.00,336.42 234.50,339.63 235.00,342.54 235.50,345.17 236.00,347.50 236.50,349.53 237.00,351.24 237.50,352.64 238.00,353.72 238.50,354.47 239.00,354.90 239.50,354.99 240.00,354.76 240.50,354.21 241.00,353.32 241.50,352.12 242.00,350.59 242.50,348.76 243.00,346.61 243.50,344.16 244.00,341.41 244.50,338.38 245.00,335.07 245.50,331.49 246.00,327.66 246.50,323.58 247.00,319.27 247.50,314.74 248.00,310.00 248.50,305.07 249.00,299.97 249.50,294.70 250.00,289.29 250.50,283.75 251.00,278.10 251.50,272.36 252.00,266.54 252.50,260.65 253.00,254.73 253.50,248.79 254.00,242.83 254.50,236.90 255.00,230.99 255.50,225.13 256.00,219.34 256.50,213.63 257.00,208.02 257.50,202.53 258.00,197.18 258.50,191.97 259.00,186.94 259.50,182.08 260.00,177.43 260.50,172.98 261.00,168.76 261.50,164.78 262.00,161.05 262.50,157.58 263.00,154.37 263.50,151.46 264.00,148.83 264.50,146.50 265.00,144.47 265.50,142.76 266.00,141.36 266.50,140.28 267.00,139.53 267.50,139.10 268.00,139.01 268.50,139.24 269.00,139.79 269.50,140.68 270.00,141.88 270.50,143.41 271.00,145.24 271.50,147.39 272.00,149.84 272.50,152.59 273.00,155.62 273.50,158.93 274.00,162.51 274.50,166.34 275.00,170.42 275.50,174.73 276.00,179.26 276.50,184.00 277.00,188.93 277.50,194.03 278.00,199.30 278.50,204.71 279.00,210.25 279.50,215.90 280.00,221.64 280.50,227.46 281.00,233.35 281.50,239.27 282.00,245.21 282.50,251.17 283.00,257.10 283.50,263.01 284.00,268.87 284.50,274.66 285.00,280.37 285.50,285.98 286.00,291.47 286.50,296.82 287.00,302.03 287.50,307.06 288.00,311.92 288.50,316.57 289.00,321.02 289.50,325.24 290.00,329.22 290.50,332.95 291.00,336.42 291.50,339.63 292.00,342.54 292.50,345.17 293.00,347.50 293.50,349.53 294.00,351.24 294.50,352.64 295.00,353.72 295.50,354.47 296.00,354.90 296.50,354.99 297.00,354.76 297.50,354.21 298.00,353.32 298.50,352.12 299.00,350.59 299.50,348.76 300.00,346.61 300.50,344.16 301.00,341.41 301.50,338.38 302.00,335.07 302.50,331.49 303.00,327.66 303.50,323.58 304.00,319.27 304.50,314.74 305.00,310.00 305.50,305.07 306.00,299.97 306.50,294.70 307.00,289.29 307.50,283.75 308.00,278.10 308.50,272.36 309.00,266.54 309.50,260.65 310.00,254.73 310.50,248.79 311.00,242.83 311.50,236.90 312.00,230.99 312.50,225.13 313.00,219.34 313.50,213.63 314.00,208.02 314.50,202.53 315.00,197.18 315.50,191.97 316.00,186.94 316.50,182.08 317.00,177.43 317.50,172.98 318.00,168.76 318.50,164.78 319.00,161.05 319.50,157.58 320.00,154.37 320.50,151.46 321.00,148.83 321.50,146.50 322.00,144.47 322.50,142.76 323.00,141.36 323.50,140.28 324.00,139.53 324.50,139.10 325.00,139.01 325.50,139.24 326.00,139.79 326.50,140.68 327.00,141.88 327.50,143.41 328.00,145.24 328.50,147.39 329.00,149.84 329.50,152.59 330.00,155.62 330.50,158.93 331.00,162.51 331.50,166.34 332.00,170.42 332.50,174.73 333.00,179.26 333.50,184.00 334.00,188.93 334.50,194.03 335.00,199.30 335.50,204.71 336.00,210.25 336.50,215.90 337.00,221.64 337.50,227.46 338.00,233.35 338.50,239.27 339.00,245.21 339.50,251.17 340.00,257.10 340.50,263.01 341.00,268.87 341.50,274.66 342.00,280.37 342.50,285.98 343.00,291.47 343.50,296.82 344.00,302.03 344.50,307.06 345.00,311.92 345.50,316.57 346.00,321.02 346.50,325.24 347.00,329.22 347.50,332.95 348.00,336.42 348.50,339.63 349.00,342.54 349.50,345.17 350.00,347.50 350.50,349.53 351.00,351.24 351.50,352.64 352.00,353.72 352.50,354.47 353.00,354.90 353.50,354.99 354.00,354.76 354.50,354.21 355.00,353.32 355.50,352.12 356.00,350.59 356.50,348.76 357.00,346.61 357.50,344.16 358.00,341.41 358.50,338.38 359.00,335.07 359.50,331.49 360.00,327.66 360.50,323.58 361.00,319.27 361.50,314.74 362.00,310.00 362.50,305.07 363.00,299.97 363.50,294.70 364.00,289.29 364.50,283.75 365.00,278.10 365.50,272.36 366.00,266.54 366.50,260.65 367.00,254.73 367.50,248.79 368.00,242.83 368.50,236.90 369.00,230.99 369.50,225.13 370.00,219.34 370.50,213.63 371.00,208.02 371.50,202.53 372.00,197.18 372.50,191.97 373.00,186.94 373.50,182.08 374.00,177.43 374.50,172.98 375.00,168.76 375.50,164.78 376.00,161.05 376.50,157.58 377.00,154.37 377.50,151.46 378.00,148.83 378.50,146.50 379.00,144.47 379.50,142.76 380.00,141.36 380.50,140.28 381.00,139.53 381.50,139.10 382.00,139.01 382.50,139.24 383.00,139.79 383.50,140.68 384.00,141.88 384.50,143.41 385.00,145.24 385.50,147.39 386.00,149.84 386.50,152.59 387.00,155.62 387.50,158.93 388.00,162.51 388.50,166.34 389.00,170.42 389.50,174.73 390.00,179.26 390.50,184.00 391.00,188.93 391.50,194.03 392.00,199.30 392.50,204.71 393.00,210.25 393.50,215.90 394.00,221.64 394.50,227.46 395.00,233.35 395.50,239.27 396.00,245.21 396.50,251.17 397.00,257.10 397.50,263.01 398.00,268.87 398.50,274.66 399.00,280.37 399.50,285.98 400.00,291.47 400.50,296.82 401.00,302.03 401.50,307.06 402.00,311.92 402.50,316.57 403.00,321.02 403.50,325.24 404.00,329.22 404.50,332.95 405.00,336.42 405.50,339.63 406.00,342.54 406.50,345.17 407.00,347.50 407.50,349.53 408.00,351.24 408.50,352.64 409.00,353.72 409.50,354.47 410.00,354.90 410.50,354.99 411.00,354.76 411.50,354.21 412.00,353.32 412.50,352.12 413.00,350.59 413.50,348.76 414.00,346.61 414.50,344.16 415.00,341.41 415.50,338.38 416.00,335.07 416.50,331.49 417.00,327.66 417.50,323.58 418.00,319.27 418.50,314.74 419.00,310.00 419.50,305.07 420.00,299.97 420.50,294.70 421.00,289.29 421.50,283.75 422.00,278.10 422.50,272.36 423.00,266.54 423.50,260.65 424.00,254.73 424.50,248.79 425.00,242.83 425.50,236.90 426.00,230.99 426.50,225.13 427.00,219.34 427.50,213.63 428.00,208.02 428.50,202.53 429.00,197.18 429.50,191.97 430.00,186.94 430.50,182.08 431.00,177.43 431.50,172.98 432.00,168.76 432.50,164.78 433.00,161.05 433.50,157.58 434.00,154.37 434.50,151.46 435.00,148.83 435.50,146.50 436.00,144.47 436.50,142.76 437.00,141.36 437.50,140.28 438.00,139.53 438.50,139.10 439.00,139.01 439.50,139.24 440.00,139.79 440.50,140.68 441.00,141.88 441.50,143.41 442.00,145.24 442.50,147.39 443.00,149.84 443.50,152.59 444.00,155.62 444.50,158.93 445.00,162.51 445.50,166.34 446.00,170.42 446.50,174.73 447.00,179.26 447.50,184.00 448.00,188.93 448.50,194.03 449.00,199.30 449.50,204.71 450.00,210.25 450.50,215.90 451.00,221.64 451.50,227.46 452.00,233.35 452.50,239.27 453.00,245.21 453.50,251.17 454.00,257.10 454.50,263.01 455.00,268.87 455.50,274.66 456.00,280.37 456.50,285.98 457.00,291.47 457.50,296.82 458.00,302.03 458.50,307.06 459.00,311.92 459.50,316.57 460.00,321.02 460.50,325.24 461.00,329.22 461.50,332.95 462.00,336.42 462.50,339.63 463.00,342.54 463.50,345.17 464.00,347.50 464.50,349.53 465.00,351.24 465.50,352.64 466.00,353.72 466.50,354.47 467.00,354.90 467.50,354.99 468.00,354.76 468.50,354.21 469.00,353.32 469.50,352.12 470.00,350.59 470.50,348.76 471.00,346.61 471.50,344.16 472.00,341.41 472.50,338.38 473.00,335.07 473.50,331.49 474.00,327.66 474.50,323.58 475.00,319.27 475.50,314.74 476.00,310.00 476.50,305.07 477.00,299.97 477.50,294.70 478.00,289.29 478.50,283.75 479.00,278.10 479.50,272.36 480.00,266.54 480.50,260.65 481.00,254.73 481.50,248.79 482.00,242.83 482.50,236.90 483.00,230.99 483.50,225.13 484.00,219.34 484.50,213.63 485.00,208.02 485.50,202.53 486.00,197.18 486.50,191.97 487.00,186.94 487.50,182.08 488.00,177.43 488.50,172.98 489.00,168.76 489.50,164.78 490.00,161.05 490.50,157.58 491.00,154.37 491.50,151.46 492.00,148.83 492.50,146.50 493.00,144.47 493.50,142.76 494.00,141.36 494.50,140.28 495.00,139.53 495.50,139.10 496.00,139.01 496.50,139.24 497.00,139.79 497.50,140.68 498.00,141.88 498.50,143.41 499.00,145.24 499.50,147.39 500.00,149.84 500.50,152.59 501.00,155.62 501.50,158.93 502.00,162.51 502.50,166.34 503.00,170.42 503.50,174.73 504.00,179.26 504.50,184.00 505.00,188.93 505.50,194.03 506.00,199.30 506.50,204.71 507.00,210.25 507.50,215.90 508.00,221.64 508.50,227.46 509.00,233.35 509.50,239.27 510.00,245.21 510.50,251.17 511.00,257.10 511.50,263.01 512.00,268.87 512.50,274.66 513.00,280.37 513.50,285.98 514.00,291.47 514.50,296.82 515.00,302.03 515.50,307.06 516.00,311.92 516.50,316.57 517.00,321.02 517.50,325.24 518.00,329.22 518.50,332.95 519.00,336.42 519.50,339.63 520.00,342.54 520.50,345.17 521.00,347.50 521.50,349.53 522.00,351.24 522.50,352.64 523.00,353.72 523.50,354.47 524.00,354.90 524.50,354.99 525.00,354.76 525.50,354.21 526.00,353.32 526.50,352.12 527.00,350.59 527.50,348.76 528.00,346.61 528.50,344.16 529.00,341.41 529.50,338.38 530.00,335.07 530.50,331.49 531.00,327.66 531.50,323.58 532.00,319.27 532.50,314.74 533.00,310.00 533.50,305.07 534.00,299.97 534.50,294.70 535.00,289.29 535.50,283.75 536.00,278.10 536.50,272.36 537.00,266.54 537.50,260.65 538.00,254.73 538.50,248.79 539.00,242.83 539.50,236.90 540.00,230.99 540.50,225.13 541.00,219.34 541.50,213.63 542.00,208.02 542.50,202.53 543.00,197.18 543.50,191.97 544.00,186.94 544.50,182.08 545.00,177.43 545.50,172.98 546.00,168.76 546.50,164.78 547.00,161.05 547.50,157.58 548.00,154.37 548.50,151.46 549.00,148.83 549.50,146.50 550.00,144.47 550.50,142.76 551.00,141.36 551.50,140.28 552.00,139.53 552.50,139.10 553.00,139.01 553.50,139.24 554.00,139.79 554.50,140.68 555.00,141.88 555.50,143.41 556.00,145.24 556.50,147.39 557.00,149.84 557.50,152.59 558.00,155.62 558.50,158.93 559.00,162.51 559.50,166.34 560.00,170.42 560.50,174.73 561.00,179.26 561.50,184.00 562.00,188.93 562.50,194.03 563.00,199.30 563.50,204.71 564.00,210.25 564.50,215.90 565.00,221.64 565.50,227.46 566.00,233.35 566.50,239.27 567.00,245.21 567.50,251.17 568.00,257.10 568.50,263.01 569.00,268.87 569.50,274.66 570.00,280.37 570.50,285.98 571.00,291.47 571.50,296.82 572.00,302.03 572.50,307.06 573.00,311.92 573.50,316.57 574.00,321.02 574.50,325.24 575.00,329.22 575.50,332.95 576.00,336.42 576.50,339.63 577.00,342.54 577.50,345.17 578.00,347.50 578.50,349.53 579.00,351.24 579.50,352.64 580.00,353.72 580.50,354.47 581.00,354.90 581.50,354.99 582.00,354.76 582.50,354.21 583.00,353.32 583.50,352.12 584.00,350.59 584.50,348.76 585.00,346.61 585.50,344.16 586.00,341.41 586.50,338.38 587.00,335.07 587.50,331.49 588.00,327.66 588.50,323.58 589.00,319.27 589.50,314.74 590.00,310.00 590.50,305.07 591.00,299.97 591.50,294.70 592.00,289.29 592.50,283.75 593.00,278.10 593.50,272.36 594.00,266.54 594.50,260.65 595.00,254.73 595.50,248.79 596.00,242.83 596.50,236.90 597.00,230.99 597.50,225.13 598.00,219.34 598.50,213.63 599.00,208.02 599.50,202.53 600.00,197.18 600.50,191.97 601.00,186.94 601.50,182.08 602.00,177.43 602.50,172.98 603.00,168.76 603.50,164.78 604.00,161.05 604.50,157.58 605.00,154.37 605.50,151.46 606.00,148.83 606.50,146.50 607.00,144.47 607.50,142.76 608.00,141.36 608.50,140.28 609.00,139.53 609.50,139.10 610.00,139.01 610.50,139.24 611.00,139.79 611.50,140.68 612.00,141.88 612.50,143.41 613.00,145.24 613.50,147.39 614.00,149.84 614.50,152.59 615.00,155.62 615.50,158.93 616.00,162.51 616.50,166.34 617.00,170.42 617.50,174.73 618.00,179.26 618.50,184.00 619.00,188.93 619.50,194.03 620.00,199.30 620.50,204.71 621.00,210.25 621.50,215.90 622.00,221.64 622.50,227.46 623.00,233.35 623.50,239.27 624.00,245.21 624.50,251.17 625.00,257.10 625.50,263.01 626.00,268.87 626.50,274.66 627.00,280.37 627.50,285.98 628.00,291.47 628.50,296.82 629.00,302.03 629.50,307.06 630.00,311.92 630.50,316.57 631.00,321.02 631.50,325.24 632.00,329.22 632.50,332.95 633.00,336.42 633.50,339.63 634.00,342.54 634.50,345.17 635.00,347.50 635.50,349.53 636.00,351.24 636.50,352.64 637.00,353.72 637.50,354.47 638.00,354.90 638.50,354.99 639.00,354.76 639.50,354.21 640.00,353.32 640.50,352.12 641.00,350.59 641.50,348.76 642.00,346.61 642.50,344.16 643.00,341.41 643.50,338.38 644.00,335.07 644.50,331.49 645.00,327.66 645.50,323.58 646.00,319.27 646.50,314.74 647.00,310.00 647.50,305.07 648.00,299.97 648.50,294.70 649.00,289.29 649.50,283.75 650.00,278.10 650.50,272.36 651.00,266.54 651.50,260.65 652.00,254.73 652.50,248.79 653.00,242.83 653.50,236.90 654.00,230.99 654.50,225.13 655.00,219.34 655.50,213.63 656.00,208.02 656.50,202.53 657.00,197.18 657.50,191.97 658.00,186.94 658.50,182.08 659.00,177.43 659.50,172.98 660.00,168.76 660.50,164.78 661.00,161.05 661.50,157.58 662.00,154.37 662.50,151.46 663.00,148.83 663.50,146.50 664.00,144.47 664.50,142.76 665.00,141.36 665.50,140.28 666.00,139.53 666.50,139.10 667.00,139.01 667.50,139.24 668.00,139.79 668.50,140.68 669.00,141.88 669.50,143.41 670.00,145.24 670.50,147.39 671.00,149.84 671.50,152.59 672.00,155.62 672.50,158.93 673.00,162.51 673.50,166.34 674.00,170.42 674.50,174.73 675.00,179.26 675.50,184.00 676.00,188.93 676.50,194.03 677.00,199.30 677.50,204.71 678.00,210.25 678.50,215.90 679.00,221.64 679.50,227.46 680.00,233.35 680.50,239.27 681.00,245.21 681.50,251.17 682.00,257.10 682.50,263.01 683.00,268.87 683.50,274.66 684.00,280.37 684.50,285.98 685.00,291.47 685.50,296.82 686.00,302.03 686.50,307.06 687.00,311.92 687.50,316.57 688.00,321.02 688.50,325.24 689.00,329.22 689.50,332.95 690.00,336.42 690.50,339.63 691.00,342.54 691.50,345.17 692.00,347.50 692.50,349.53 693.00,351.24 693.50,352.64 694.00,353.72 694.50,354.47 695.00,354.90 695.50,354.99 696.00,354.76 696.50,354.21 697.00,353.32 697.50,352.12 698.00,350.59 698.50,348.76 699.00,346.61 699.50,344.16 700.00,341.41 700.50,338.38 701.00,335.07 701.50,331.49 702.00,327.66 702.50,323.58 703.00,319.27 703.50,314.74 704.00,310.00 704.50,305.07 705.00,299.97 705.50,294.70 706.00,289.29 706.50,283.75 707.00,278.10 707.50,272.36 708.00,266.54 708.50,260.65 709.00,254.73 709.50,248.79 710.00,242.83 710.50,236.90 711.00,230.99 711.50,225.13 712.00,219.34 712.50,213.63 713.00,208.02 713.50,202.53 714.00,197.18 714.50,191.97 715.00,186.94 715.50,182.08 716.00,177.43 716.50,172.98 717.00,168.76 717.50,164.78 718.00,161.05 718.50,157.58 719.00,154.37 719.50,151.46 720.00,148.83 720.50,146.50 721.00,144.47 721.50,142.76 722.00,141.36 722.50,140.28 723.00,139.53 723.50,139.10 724.00,139.01 724.50,139.24 725.00,139.79 725.50,140.68 726.00,141.88 726.50,143.41 727.00,145.24 727.50,147.39 728.00,149.84 728.50,152.59 729.00,155.62 729.50,158.93 730.00,162.51 730.50,166.34 731.00,170.42 731.50,174.73 732.00,179.26 732.50,184.00 733.00,188.93 733.50,194.03 734.00,199.30 734.50,204.71 735.00,210.25 735.50,215.90 736.00,221.64 736.50,227.46 737.00,233.35 737.50,239.27 738.00,245.21 738.50,251.17 739.00,257.10 739.50,263.01 740.00,268.87 740.50,274.66 741.00,280.37 741.50,285.98 742.00,291.47 742.50,296.82 743.00,302.03 743.50,307.06 744.00,311.92 744.50,316.57 745.00,321.02 745.50,325.24 746.00,329.22 746.50,332.95 747.00,336.42 747.50,339.63 748.00,342.54 748.50,345.17 749.00,347.50 749.50,349.53 750.00,351.24 750.50,352.64 751.00,353.72 751.50,354.47 752.00,354.90 752.50,354.99 753.00,354.76 753.50,354.21 754.00,353.32 754.50,352.12 755.00,350.59 755.50,348.76 756.00,346.61 756.50,344.16 757.00,341.41 757.50,338.38 758.00,335.07 758.50,331.49 759.00,327.66 759.50,323.58 760.00,319.27 760.50,314.74 761.00,310.00 761.50,305.07 762.00,299.97 762.50,294.70 763.00,289.29 763.50,283.75 764.00,278.10 764.50,272.36 765.00,266.54 765.50,260.65 766.00,254.73 766.50,248.79 767.00,242.83 767.50,236.90 768.00,230.99 768.50,225.13 769.00,219.34 769.50,213.63 770.00,208.02 770.50,202.53 771.00,197.18 771.50,191.97 772.00,186.94 772.50,182.08 773.00,177.43 773.50,172.98 774.00,168.76 774.50,164.78 775.00,161.05 775.50,157.58 776.00,154.37 776.50,151.46 777.00,148.83 777.50,146.50 778.00,144.47 778.50,142.76 779.00,141.36 779.50,140.28 780.00,139.53 780.50,139.10 781.00,139.01 781.50,139.24" fill="none" stroke="#868a1e" stroke-width="3.1"/><polygon points="69,133 77,127 77,139" fill="#1a86d0"/><path d="M57.2,244 h10 l1.4,5.2 l-1.4,4.6 h-10 z" fill="#f2ec00"/><polygon points="775,239.4 782,233.7 782,245.1" fill="#ea3088"/><rect x="57" y="374" width="725" height="46" fill="#0c0c0c"/><rect x="59" y="379" width="70" height="38" fill="#3a3a3a" stroke="#1a78c2" stroke-width="2"/><rect x="60" y="380" width="68" height="11" fill="#171717"/><rect x="60" y="379.5" width="24" height="11.5" fill="#f0e400"/><rect x="133" y="378" width="71" height="40" fill="#3c3c3c"/><rect x="134" y="379.5" width="69" height="11.5" fill="#171717"/><rect x="134" y="379.5" width="24" height="11.5" fill="#e8307e"/><rect x="206.5" y="378.5" width="71" height="39" fill="#0a0a0a" stroke="#585858" stroke-width="1" stroke-dasharray="1 1"/><rect x="224" y="398" width="37" height="1" fill="#6a6a6a"/><rect x="242" y="387" width="1" height="22" fill="#6a6a6a"/><rect x="548" y="378" width="1" height="40" fill="#222"/><rect x="551" y="378" width="93" height="40" fill="#404040"/><rect x="551" y="378" width="93" height="13" fill="#1c1c1c"/><rect x="647" y="378" width="79" height="40" fill="#404040"/><rect x="647" y="378" width="79" height="13" fill="#1c1c1c"/><rect x="728" y="378" width="54" height="40" fill="#1c1c1c"/><rect x="419.5" y="114" width="28.5" height="11.7" fill="#0a78c8"/><polygon points="57.2,416.2 57.2,420 61,420" fill="#d8d8d8"/><path d="M756.5,381.5 V390 M756.5,388 L753.6,385.6 V384.3 M756.5,386.6 L759.6,384.2 V382.8" fill="none" stroke="#9a9a9a" stroke-width="1.1"/><path d="M755.2,381.8 L756.5,379.6 L757.8,381.8 Z" fill="#9a9a9a"/><circle cx="753.6" cy="384" r="0.9" fill="#9a9a9a"/><rect x="758.8" y="382" width="1.6" height="1.6" fill="#9a9a9a"/><rect x="768.6" y="379.6" width="3.9" height="3.3" fill="none" stroke="#8a8a8a" stroke-width="1"/><path d="M770.5,383 V384.5 M765.3,384.5 H772.8 M767.7,384.5 V386" fill="none" stroke="#8a8a8a" stroke-width="1"/><rect x="766.2" y="386.4" width="3" height="3.6" fill="none" stroke="#8a8a8a" stroke-width="1"/><path d="M770.8,384.8 L776.4,390.2 M776.4,384.8 L770.8,390.2" stroke="#e8203a" stroke-width="1.6"/>
</svg>
<div class="t" style="left:77.04px;top:1.8px;font-size:9.8px;color:#e8e8e8;font-weight:normal;transform:scaleX(1.0818)">Utility</div><div class="t" style="left:141.9px;top:1.8px;font-size:9.8px;color:#e8e8e8;font-weight:normal;transform:scaleX(0.9503)">Display</div><div class="t" style="left:205.86px;top:1.8px;font-size:9.8px;color:#e8e8e8;font-weight:normal;transform:scaleX(0.9785)">Acquire</div><div class="t" style="left:269.85px;top:1.8px;font-size:9.8px;color:#e8e8e8;font-weight:normal;transform:scaleX(0.9651)">Trigger</div><div class="t" style="left:333.9px;top:1.8px;font-size:9.8px;color:#e8e8e8;font-weight:normal;transform:scaleX(0.9799)">Cursors</div><div class="t" style="left:397.28px;top:1.8px;font-size:9.8px;color:#e8e8e8;font-weight:normal;transform:scaleX(0.9808)">Measure</div><div class="t" style="left:461.11px;top:1.8px;font-size:9.8px;color:#e8e8e8;font-weight:normal;transform:scaleX(1.0999)">Math</div><div class="t" style="left:525.46px;top:1.8px;font-size:9.8px;color:#e8e8e8;font-weight:normal;transform:scaleX(0.9626)">Analysis</div><div class="t" style="left:712.99px;top:2.6px;font-size:9.8px;color:#e8e8e8;font-weight:normal;transform:scaleX(0.8481)">TRIGGER</div><div class="t" style="left:580.84px;top:-7.0px;font-size:11px;color:#c4c4c4;font-weight:bold;transform:scaleX(1.0102)">SIGLENT</div><div class="t" style="left:643.84px;top:-6.5px;font-size:9.3px;color:#12a4bc;font-weight:normal;transform:scaleX(1.0459)">Trig'd</div><div class="t" style="left:586.34px;top:7.9px;font-size:9.3px;color:#e3287a;font-weight:normal;transform:scaleX(0.9544)">f(C2) = 25.00003kHz</div><div class="t" style="left:62.4px;top:111.7px;font-size:9.5px;color:#d6d61e;font-weight:normal;transform:scaleX(0.9797)">[80.0mV/,0.00V]</div><div class="t" style="left:185.61px;top:111.7px;font-size:9.5px;color:#e3287a;font-weight:normal;transform:scaleX(0.9677)">[5.00V/,0.00V]</div><div class="t" style="left:420.44px;top:111.6px;font-size:9.5px;color:#10243c;font-weight:normal;transform:scaleX(1.0367)">Zoom</div><div class="t" style="left:449.9px;top:111.7px;font-size:9.5px;color:#e8e8e8;font-weight:normal;transform:scaleX(0.9895)">[5.00ns/div, 11.2550us]</div><div class="t" style="left:66.67px;top:375.6px;font-size:9px;color:#6e5a00;font-weight:normal;transform:scaleX(0.8335)">C1</div><div class="t" style="left:108.51px;top:375.3px;font-size:9px;color:#d6d61e;font-weight:normal;transform:scaleX(0.822)">DC50</div><div class="t" style="left:60.74px;top:389.4px;font-size:9px;color:#d6d61e;font-weight:normal;transform:scaleX(0.9544)">1X</div><div class="t" style="left:97.12px;top:389.4px;font-size:9px;color:#e8e8e8;font-weight:normal;transform:scaleX(0.9794)">100mV/</div><div class="t" style="left:60.42px;top:401.2px;font-size:9px;color:#d6d61e;font-weight:normal;transform:scaleX(1.0422)">350M</div><div class="t" style="left:104.97px;top:401.2px;font-size:9px;color:#e8e8e8;font-weight:normal;transform:scaleX(0.9571)">0.00V</div><div class="t" style="left:140.63px;top:375.6px;font-size:9px;color:#5a1030;font-weight:normal;transform:scaleX(0.9166)">C2</div><div class="t" style="left:167.43px;top:375.6px;font-size:9px;color:#e3287a;font-weight:bold;transform:scaleX(0.9586)">H</div><div class="t" style="left:179.67px;top:375.6px;font-size:9px;color:#e3287a;font-weight:bold;transform:scaleX(0.8853)">DC1M</div><div class="t" style="left:134.73px;top:389.4px;font-size:9px;color:#e3287a;font-weight:normal;transform:scaleX(0.9743)">1X</div><div class="t" style="left:176.53px;top:389.4px;font-size:9px;color:#e8e8e8;font-weight:normal;transform:scaleX(0.9791)">5.00V/</div><div class="t" style="left:134.32px;top:401.2px;font-size:9px;color:#e3287a;font-weight:normal;transform:scaleX(1.0469)">350M</div><div class="t" style="left:178.96px;top:401.2px;font-size:9px;color:#e8e8e8;font-weight:normal;transform:scaleX(0.9831)">0.00V</div><div class="t" style="left:554.25px;top:375.2px;font-size:9.3px;color:#e8e8e8;font-weight:normal;transform:scaleX(1.0156)">Timebase</div><div class="t" style="left:553.6px;top:389.8px;font-size:9px;color:#e8e8e8;font-weight:normal;transform:scaleX(1.0211)">14.8us</div><div class="t" style="left:597.88px;top:389.8px;font-size:9px;color:#e8e8e8;font-weight:normal;transform:scaleX(1.0766)">5.00us/div</div><div class="t" style="left:553.69px;top:400.9px;font-size:9px;color:#e8e8e8;font-weight:normal;transform:scaleX(1.0585)">50.0kpts</div><div class="t" style="left:600.62px;top:400.9px;font-size:9px;color:#e8e8e8;font-weight:normal;transform:scaleX(0.9806)">1.00GSa/s</div><div class="t" style="left:649.76px;top:375.2px;font-size:9.3px;color:#e3287a;font-weight:normal;transform:scaleX(0.9947)">Trigger</div><div class="t" style="left:701.31px;top:375.4px;font-size:8.5px;color:#e3287a;font-weight:bold;transform:scaleX(0.8577)">C2 DC</div><div class="t" style="left:648.92px;top:389.8px;font-size:9px;color:#e8e8e8;font-weight:normal;transform:scaleX(1.1312)">Auto</div><div class="t" style="left:700.54px;top:389.8px;font-size:9px;color:#e8e8e8;font-weight:normal;transform:scaleX(0.9584)">1.50V</div><div class="t" style="left:649.11px;top:400.9px;font-size:9px;color:#e8e8e8;font-weight:normal;transform:scaleX(1.0004)">Edge</div><div class="t" style="left:698.4px;top:400.9px;font-size:9px;color:#e8e8e8;font-weight:normal;transform:scaleX(1.0075)">Rising</div><div class="t" style="left:739.42px;top:389.3px;font-size:9px;color:#e8e8e8;font-weight:normal;transform:scaleX(0.982)">15:50:48</div><div class="t" style="left:738.48px;top:401.2px;font-size:9px;color:#e8e8e8;font-weight:normal;transform:scaleX(1.0537)">2023/8/7</div><div class="t" style="left:57.7px;top:61.9px;font-size:8px;color:#7a6000;font-weight:normal;transform:scaleX(0.7783)">C1</div><div class="t" style="left:57.49px;top:239.8px;font-size:8px;color:#7a6000;font-weight:normal;transform:scaleX(0.7999)">C1</div>
</body></html>
